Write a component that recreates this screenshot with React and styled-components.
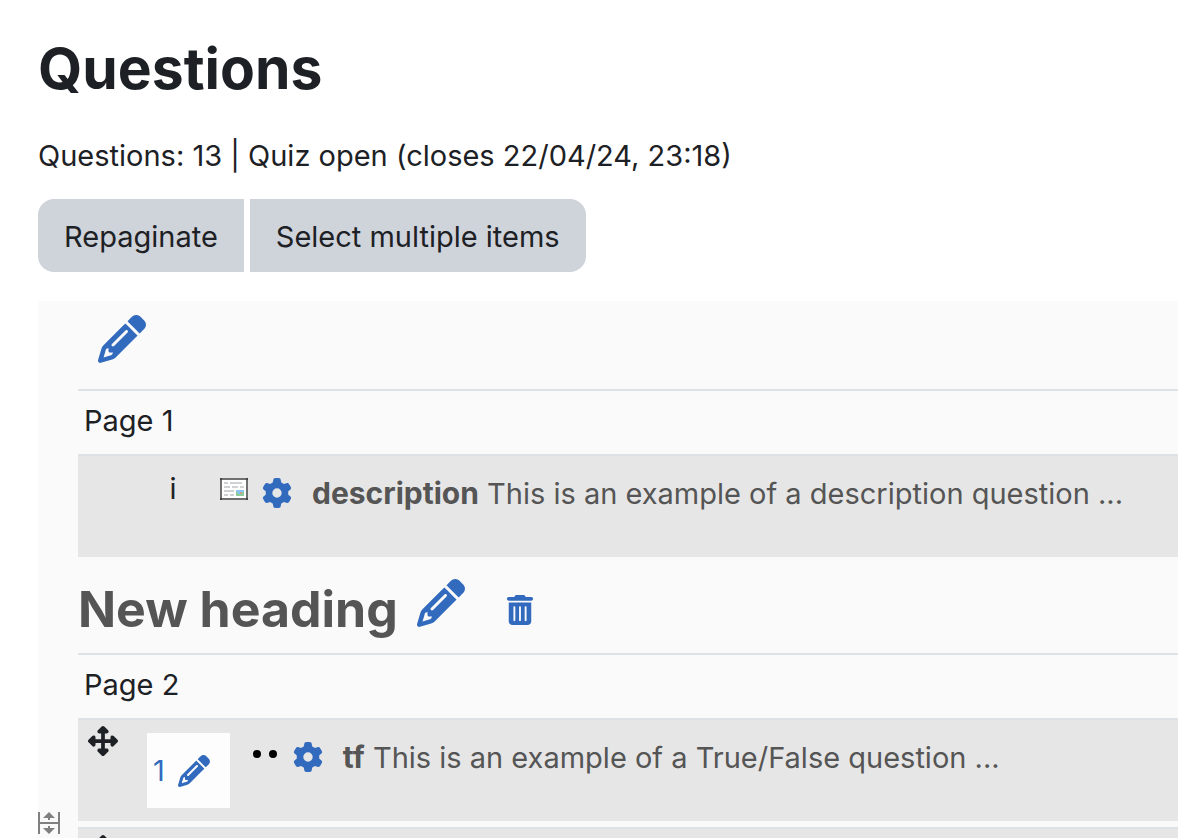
import styled, { createGlobalStyle } from 'styled-components'
import { FaPencil, FaGear, FaTrashCan, FaUpDownLeftRight } from 'react-icons/fa6'

const GlobalStyle = createGlobalStyle`
  * {
    box-sizing: border-box;
  }
  body {
    margin: 0;
    background: #fff;
    color: #1d2125;
    font-family: Inter, 'Liberation Sans', sans-serif;
    font-size: 29px;
    line-height: 45px;
  }
  a {
    text-decoration: none;
  }
  svg {
    display: block;
    flex-shrink: 0;
  }
`

const Page = styled.main`
  height: 100vh;
  overflow: hidden;
  padding: 33px 0 0 38px;
`
const Title = styled.h1`
  margin: 0;
  font-size: 57px;
  font-weight: 700;
  line-height: 72px;
`
const Status = styled.p`
  margin: 28px 0 21px;
`
const Buttons = styled.div`
  display: flex;
  gap: 6px;
  margin-bottom: 29px;
`
const Button = styled.button`
  border: 0;
  padding: 15px 26px 13px;
  background: #cfd3da;
  color: inherit;
  font: inherit;
  white-space: nowrap;
  &:first-child {
    border-radius: 16px 0 0 16px;
  }
  &:last-child {
    border-radius: 0 16px 16px 0;
  }
`
const Sections = styled.div`
  padding-left: 40px;
  background: #fafafa;
`
const SectionHead = styled.header`
  display: flex;
  align-items: flex-start;
  gap: 19px;
  padding: ${(props) => (props.$named ? '22px 0 14px' : '14px 20px 26px')};
`
const SectionTitle = styled.h2`
  margin: 0;
  color: #555;
  font-size: 50px;
  font-weight: 700;
  line-height: 60px;
`
const IconLink = styled.a`
  display: block;
  color: #326bbd;
  font-size: ${(props) => props.$size || 48}px;
`
const Trash = styled(IconLink)`
  margin: 16px 0 0 21px;
`
const Slots = styled.ul`
  margin: 0;
  padding: 0;
  list-style: none;
`
const PageName = styled.li`
  border-top: 2px solid #dee2e6;
  padding: 7px 6px 11px;
`
const Slot = styled.li`
  position: relative;
  display: flex;
  align-items: flex-start;
  min-height: 103px;
  border-top: 2px solid #dee2e6;
  padding-left: 10px;
  background: #e6e6e6;
  & + & {
    margin-top: 6px;
  }
`
const Drag = styled.span`
  width: 30px;
  flex-shrink: 0;
  margin: 6px 29px 0 0;
  font-size: 30px;
`
const Info = styled.span`
  width: 52px;
  padding-top: 10px;
  text-align: center;
`
const Number = styled.a`
  display: flex;
  align-items: center;
  gap: 13px;
  margin-top: 13px;
  padding: 15px 20px 15px 6px;
  background: #fdfdfd;
  color: #326bbd;
`
const Activity = styled.div`
  display: flex;
  align-items: flex-start;
  min-width: 0;
  margin-top: 15px;
  padding-left: 21px;
  svg {
    margin-top: 7px;
  }
`
const Question = styled.a`
  display: flex;
  align-items: flex-start;
  gap: 20px;
  min-width: 0;
  margin-left: 14px;
  color: #555;
  white-space: nowrap;
  svg {
    color: #326bbd;
    font-size: 30px;
  }
  b {
    font-size: 30px;
  }
`
const PageBreak = styled.a`
  position: absolute;
  left: -40px;
  bottom: -13px;
`

function DescriptionIcon() {
  return (
    <svg width="28" height="30" viewBox="0 0 28 30" aria-hidden="true">
      <path fill="#fff" stroke="#707070" strokeWidth="2" d="M1 1h26v20H1z" />
      <path fill="#444" d="M0 0h2v2H0zM26 0h2v2h-2zM0 20h2v2H0zM26 20h2v2h-2z" />
      <path
        fill="#ced2d2"
        d="M4 4h4v2H4zM10 4h12v2H10zM4 8h6v2H4zM12 8h6v2h-6zM20 8h4v2h-4zM4 12h10v2H4zM4 16h4v2H4zM10 16h4v2h-4z"
      />
      <path fill="#86c5f4" d="M16 12h8v6h-8z" />
      <path fill="#8dcb9b" d="M16 14h2v2h-2zM16 16h8v2h-8zM22 14h2v2h-2z" />
      <path fill="#c8a08f" d="M20 14h2v2h-2z" />
    </svg>
  )
}

function TrueFalseIcon() {
  return (
    <svg width="28" height="30" viewBox="0 0 28 30" aria-hidden="true">
      <circle cx="6" cy="12" r="4" />
      <circle cx="22" cy="12" r="4" />
    </svg>
  )
}

function PageBreakIcon() {
  return (
    <svg width="22" height="22" viewBox="0 0 22 22" aria-hidden="true">
      <path fill="#fafafa" d="M0 0h22v22H0z" />
      <path
        fill="#808080"
        d="M0 0h2v10h18V0h2v22h-2V12H2v10H0zM11 0l6 6h-5v2h-2V6H5zM10 14h2v2h5l-6 6-6-6h5z"
      />
    </svg>
  )
}

function Row({ number, icon, name, text, split }) {
  return (
    <Slot>
      <Drag>{number && <FaUpDownLeftRight />}</Drag>
      {number ? (
        <Number href="#mark" aria-label={`Edit question number ${number}`}>
          {number}
          <FaPencil size={32} />
        </Number>
      ) : (
        <Info>i</Info>
      )}
      <Activity>
        {icon}
        <Question href="#question">
          <FaGear />
          <span>
            <b>{name}</b> {text}
          </span>
        </Question>
      </Activity>
      {split && (
        <PageBreak href="#split" aria-label="Add page break">
          <PageBreakIcon />
        </PageBreak>
      )}
    </Slot>
  )
}

function App() {
  return (
    <Page>
      <GlobalStyle />
      <Title>Questions</Title>
      <Status>Questions: 13 | Quiz open (closes 22/04/24, 23:18)</Status>
      <Buttons>
        <Button type="button">Repaginate</Button>
        <Button type="button">Select multiple items</Button>
      </Buttons>
      <Sections>
        <SectionHead>
          <IconLink href="#heading-1" aria-label="Edit heading">
            <FaPencil />
          </IconLink>
        </SectionHead>
        <Slots>
          <PageName>Page 1</PageName>
          <Row
            icon={<DescriptionIcon />}
            name="description"
            text="This is an example of a description question ..."
          />
        </Slots>
        <SectionHead $named>
          <SectionTitle>New heading</SectionTitle>
          <IconLink href="#heading-2" aria-label="Edit heading">
            <FaPencil />
          </IconLink>
          <Trash href="#remove" $size={30} aria-label="Remove heading">
            <FaTrashCan />
          </Trash>
        </SectionHead>
        <Slots>
          <PageName>Page 2</PageName>
          <Row
            number="1"
            icon={<TrueFalseIcon />}
            name="tf"
            text="This is an example of a True/False question ..."
            split
          />
          <Slot>
            <Drag>
              <FaUpDownLeftRight />
            </Drag>
          </Slot>
        </Slots>
      </Sections>
    </Page>
  )
}

export default App
